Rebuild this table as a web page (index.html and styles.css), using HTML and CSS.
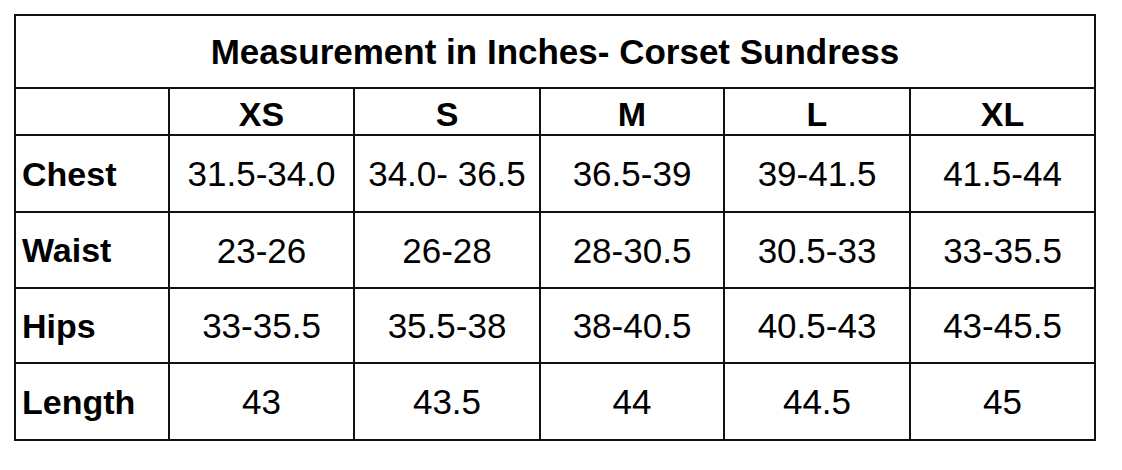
FILE: index.html
```html
<!DOCTYPE html>
<html>
<head>
<meta charset="utf-8">
<link rel="stylesheet" href="styles.css">
</head>
<body>
<div class="chart">
  <div class="cell title">Measurement in Inches- Corset Sundress</div>
  <div class="cell"></div>
  <div class="cell head">XS</div>
  <div class="cell head">S</div>
  <div class="cell head">M</div>
  <div class="cell head">L</div>
  <div class="cell head">XL</div>
  <div class="cell label">Chest</div>
  <div class="cell">31.5-34.0</div>
  <div class="cell">34.0- 36.5</div>
  <div class="cell">36.5-39</div>
  <div class="cell">39-41.5</div>
  <div class="cell">41.5-44</div>
  <div class="cell label">Waist</div>
  <div class="cell">23-26</div>
  <div class="cell">26-28</div>
  <div class="cell">28-30.5</div>
  <div class="cell">30.5-33</div>
  <div class="cell">33-35.5</div>
  <div class="cell label">Hips</div>
  <div class="cell">33-35.5</div>
  <div class="cell">35.5-38</div>
  <div class="cell">38-40.5</div>
  <div class="cell">40.5-43</div>
  <div class="cell">43-45.5</div>
  <div class="cell label">Length</div>
  <div class="cell">43</div>
  <div class="cell">43.5</div>
  <div class="cell">44</div>
  <div class="cell">44.5</div>
  <div class="cell">45</div>
</div>
</body>
</html>
```
FILE: styles.css
```css
html, body {
  margin: 0;
  padding: 0;
  background: #fff;
}
body {
  padding: 14px 0 0 14px;
  font-family: "Liberation Sans", Arial, sans-serif;
  color: #000;
}
.chart {
  display: grid;
  width: max-content;
  grid-template-columns: 152px 183px 184px 182px 184px 183px;
  grid-template-rows: 71px 45px 75px 74px 73px 75px;
  gap: 2px;
  padding: 2px;
  background: #111;
}
.cell {
  background: #fff;
  display: flex;
  align-items: center;
  justify-content: center;
  font-size: 35px;
  line-height: 1;
}
.title {
  grid-column: 1 / -1;
  font-weight: bold;
  font-size: 35px;
}
.head {
  font-weight: bold;
  font-size: 34px;
  padding-top: 4px;
}
.label {
  justify-content: flex-start;
  padding-left: 6px;
  font-weight: bold;
  font-size: 34px;
}
```
